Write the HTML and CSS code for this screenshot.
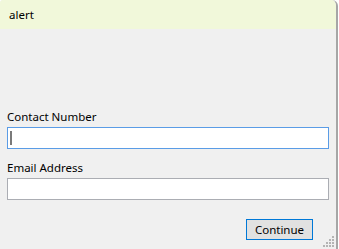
FILE: index.html
```html
<!DOCTYPE html>
<html>
<head>
<meta charset="utf-8">
<link rel="stylesheet" href="styles.css">
</head>
<body>
<div class="window">
  <div class="header">alert</div>
  <div class="form">
    <div class="label">Contact Number</div>
    <div class="field focused"><span class="caret"></span></div>
    <div class="label second">Email Address</div>
    <div class="field"></div>
    <div class="actions">
      <button class="btn">Continue</button>
    </div>
  </div>
  <svg class="grip" width="12" height="12" viewBox="0 0 12 12">
    <g fill="#b4b4b4">
      <rect x="9" y="0" width="2" height="2"/>
      <rect x="6" y="3" width="2" height="2"/>
      <rect x="9" y="3" width="2" height="2"/>
      <rect x="3" y="6" width="2" height="2"/>
      <rect x="6" y="6" width="2" height="2"/>
      <rect x="9" y="6" width="2" height="2"/>
      <rect x="0" y="9" width="2" height="2"/>
      <rect x="3" y="9" width="2" height="2"/>
      <rect x="6" y="9" width="2" height="2"/>
      <rect x="9" y="9" width="2" height="2"/>
    </g>
  </svg>
</div>
</body>
</html>
```
FILE: styles.css
```css
html, body {
  margin: 0;
  padding: 0;
  background: #ffffff;
}
body {
  font-family: "Noto Sans", "Liberation Sans", Arial, sans-serif;
  font-size: 11.5px;
  color: #000;
}
.window {
  position: relative;
  width: 336px;
  height: 249px;
  background: #f0f0f0;
  border-right: 2px solid #a6a6a6;
  border-top-right-radius: 6px;
  border-top-left-radius: 3px;
  display: flex;
  flex-direction: column;
  overflow: hidden;
}
.header {
  height: 29px;
  line-height: 29px;
  padding-left: 9px;
  background: #f1f8da;
}
.form {
  display: flex;
  flex-direction: column;
  padding: 80px 7px 0 7px;
}
.label {
  height: 15px;
  line-height: 15px;
  margin-bottom: 3px;
}
.label.second {
  margin-top: 11px;
}
.field {
  box-sizing: border-box;
  height: 22px;
  width: 322px;
  background: #ffffff;
  border: 1px solid #abadb3;
  display: flex;
  align-items: center;
  padding-left: 2px;
}
.field.focused {
  border-color: #5a9ce6;
}
.caret {
  display: block;
  width: 2px;
  height: 14px;
  background: #7a7a7a;
}
.actions {
  display: flex;
  justify-content: flex-end;
  margin-top: 19px;
  padding-right: 16px;
}
.btn {
  box-sizing: border-box;
  width: 67px;
  height: 21px;
  padding: 0;
  line-height: 19px;
  background: #e1e1e1;
  border: 1px solid #0078d7;
  font-family: "Noto Sans", "Liberation Sans", Arial, sans-serif;
  font-size: 11.5px;
  color: #000;
}
.grip {
  position: absolute;
  right: 1px;
  bottom: 1px;
}
```
